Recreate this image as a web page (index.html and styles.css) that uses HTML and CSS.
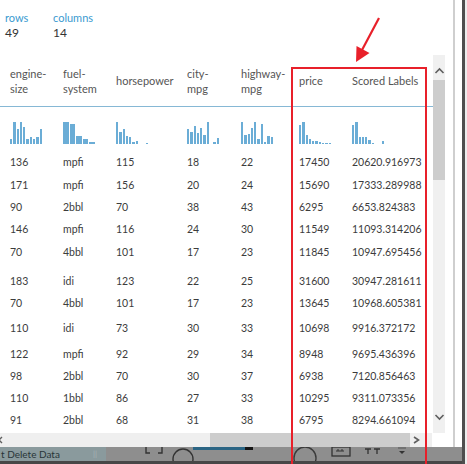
FILE: index.html
```html
<!DOCTYPE html>
<html>
<head>
<meta charset="utf-8">
<link rel="stylesheet" href="styles.css">
</head>
<body>
<div class="screen">
  <div class="app">
    <div class="main">
      <div class="pane">
        <div class="stats">
          <div class="stat"><div class="stat-label">rows</div><div class="stat-value">49</div></div>
          <div class="stat"><div class="stat-label">columns</div><div class="stat-value">14</div></div>
        </div>
        <div class="viewport">
          <div class="table">
            <div class="cols head">
              <div>engine-<br>size</div>
              <div>fuel-<br>system</div>
              <div>horsepower</div>
              <div>city-<br>mpg</div>
              <div>highway-<br>mpg</div>
              <div>price</div>
              <div>Scored Labels</div>
            </div>
            <div class="cols hists">
              <div class="hist"><span style="height:5px"></span><span style="height:22px"></span><span style="height:15px"></span><span style="height:22px"></span><span style="height:17px"></span><span style="height:5px"></span><span style="height:7px"></span><span style="height:5px"></span><span style="height:7px"></span><span style="height:15px"></span></div>
              <div class="hist"><span style="height:22px"></span><span style="height:20px"></span><span style="height:8px"></span><span style="height:5px"></span><span style="height:2px"></span></div>
              <div class="hist"><span style="height:22px"></span><span style="height:12px"></span><span style="height:15px"></span><span style="height:8px"></span><span style="height:7px"></span><span style="height:2px"></span><span style="height:3px"></span><span style="height:0"></span><span style="height:0"></span><span style="height:1px"></span></div>
              <div class="hist"><span style="height:15px"></span><span style="height:12px"></span><span style="height:18px"></span><span style="height:11px"></span><span style="height:16px"></span><span style="height:9px"></span><span style="height:22px"></span><span style="height:0"></span><span style="height:2px"></span><span style="height:6px"></span></div>
              <div class="hist"><span style="height:22px"></span><span style="height:9px"></span><span style="height:10px"></span><span style="height:16px"></span><span style="height:22px"></span><span style="height:5px"></span><span style="height:20px"></span><span style="height:2px"></span><span style="height:8px"></span><span style="height:7px"></span></div>
              <div class="hist"><span style="height:19px"></span><span style="height:22px"></span><span style="height:9px"></span><span style="height:5px"></span><span style="height:3px"></span><span style="height:3px"></span><span style="height:2px"></span><span style="height:1px"></span><span style="height:1px"></span><span style="height:1px"></span></div>
              <div class="hist"><span style="height:19px"></span><span style="height:22px"></span><span style="height:7px"></span><span style="height:7px"></span><span style="height:7px"></span><span style="height:4px"></span><span style="height:1px"></span><span style="height:0"></span><span style="height:0"></span><span style="height:3px"></span></div>
            </div>
            <div class="cols rows">
              <div>136</div><div>mpfi</div><div>115</div><div>18</div><div>22</div><div>17450</div><div>20620.916973</div>
              <div>171</div><div>mpfi</div><div>156</div><div>20</div><div>24</div><div>15690</div><div>17333.289988</div>
              <div>90</div><div>2bbl</div><div>70</div><div>38</div><div>43</div><div>6295</div><div>6653.824383</div>
              <div>146</div><div>mpfi</div><div>116</div><div>24</div><div>30</div><div>11549</div><div>11093.314206</div>
              <div>70</div><div>4bbl</div><div>101</div><div>17</div><div>23</div><div>11845</div><div>10947.695456</div>
              <div>183</div><div>idi</div><div>123</div><div>22</div><div>25</div><div>31600</div><div>30947.281611</div>
              <div>70</div><div>4bbl</div><div>101</div><div>17</div><div>23</div><div>13645</div><div>10968.605381</div>
              <div>110</div><div>idi</div><div>73</div><div>30</div><div>33</div><div>10698</div><div>9916.372172</div>
              <div>122</div><div>mpfi</div><div>92</div><div>29</div><div>34</div><div>8948</div><div>9695.436396</div>
              <div>98</div><div>2bbl</div><div>70</div><div>30</div><div>37</div><div>6938</div><div>7120.856463</div>
              <div>110</div><div>1bbl</div><div>86</div><div>27</div><div>33</div><div>10295</div><div>9311.073356</div>
              <div>91</div><div>2bbl</div><div>68</div><div>31</div><div>38</div><div>6795</div><div>8294.661094</div>
            </div>
          </div>
          <div class="vscroll">
            <svg class="vs-btn" width="12" height="25" viewBox="0 0 12 25"><polyline points="2.5,18 6.5,14 10.5,18" fill="none" stroke="#5f5f5f" stroke-width="1.6"/></svg>
            <div class="vthumb"></div>
            <div class="vspace"></div>
            <svg class="vs-btn" width="12" height="25" viewBox="0 0 12 25"><polyline points="2.5,7 6.5,11 10.5,7" fill="none" stroke="#5f5f5f" stroke-width="1.6"/></svg>
          </div>
        </div>
        <div class="hscroll-row">
          <div class="hscroll">
            <svg class="hs-left" width="4" height="14" viewBox="0 0 4 14"><polyline points="2,4 -1,7 2,10" fill="none" stroke="#5f5f5f" stroke-width="1.4"/></svg>
            <div class="hthumb"></div>
            <svg class="hs-right" width="22" height="14" viewBox="0 0 22 14"><polyline points="4,4 8.5,7 4,10" fill="none" stroke="#5f5f5f" stroke-width="1.6"/></svg>
          </div>
        </div>
      </div>
      <div class="gutter"><div class="gutter-line"></div></div>
    </div>
    <div class="strip">
      <div class="strip-left"><span class="strip-text">t Delete Data</span><span class="strip-sep">||</span></div>
      <div class="strip-right">
        <svg width="356" height="14" viewBox="106 447 356 14">
          <polyline points="146,447 146,453 150,453" fill="none" stroke="#333" stroke-width="1.4"/>
          <polyline points="158,453 162,453 162,447" fill="none" stroke="#333" stroke-width="1.4"/>
          <circle cx="183" cy="459" r="10" fill="none" stroke="#333" stroke-width="1.4"/>
          <rect x="193" y="447" width="52" height="3" fill="#2b6584"/>
          <rect x="245" y="447" width="8" height="3" fill="#151515"/>
          <circle cx="305" cy="458" r="11" fill="none" stroke="#3a3a3a" stroke-width="1.4"/>
          <rect x="332" y="447" width="18" height="9" fill="none" stroke="#333" stroke-width="1.3"/>
          <path d="M337,452 v-2 h2 v2 M341,452 v-2 h2 v2" fill="none" stroke="#333" stroke-width="1"/>
          <path d="M365,449 h6 M368,449 v5 M374,449 h6 M377,449 v5" fill="none" stroke="#333" stroke-width="1.3"/>
          <path d="M398,448 h8" stroke="#555" stroke-width="1"/>
          <polygon points="399,451 405,451 402,454" fill="#333"/>
        </svg>
      </div>
    </div>
    <div class="strip-edge"></div>
  </div>
  <div class="edge"></div>

  <div class="annot-box"></div>
  <svg class="annot-arrow" width="467" height="464" viewBox="0 0 467 464">
    <line x1="379" y1="18" x2="362" y2="50" stroke="#e8202a" stroke-width="2.2"/>
    <polygon points="356,62 356.5,46 369.5,53" fill="#e8202a"/>
  </svg>
</div>
</body>
</html>
```
FILE: styles.css
```css
html, body {
  margin: 0;
  padding: 0;
}

body {
  width: 467px;
  height: 464px;
  overflow: hidden;
  background: #fff;
  font-family: Lato, "Open Sans", "DejaVu Sans", sans-serif;
  font-size: 11px;
  color: #3c3c3c;
}

.screen {
  position: relative;
  display: flex;
  width: 467px;
  height: 464px;
  overflow: hidden;
}

.app {
  width: 462px;
  display: flex;
  flex-direction: column;
}

.main {
  display: flex;
  height: 447px;
}

.pane {
  width: 446px;
  display: flex;
  flex-direction: column;
}

/* stats */
.stats {
  height: 55px;
  box-sizing: border-box;
  display: flex;
  padding: 10px 0 0 5px;
  line-height: 15px;
}

.stat {
  width: 48px;
}

.stat-label {
  color: #3a9ad0;
}

.stat-value {
  color: #333;
  font-size: 12px;
}

/* table */
.viewport {
  display: flex;
  height: 378px;
}

.table {
  width: 433px;
  overflow: hidden;
}

.cols {
  display: grid;
  grid-template-columns: 53px 53px 71px 54px 58px 53px 1fr;
  padding-left: 10px;
}

.head {
  height: 51px;
  border-bottom: 1px solid #86b8d5;
  align-items: center;
  line-height: 15px;
  color: #555;
}

.hists {
  height: 44px;
  box-sizing: border-box;
  align-items: end;
  padding-bottom: 7px;
}

.hist {
  display: flex;
  align-items: flex-end;
  gap: 1px;
  width: 32px;
  height: 22px;
}

.hist span {
  flex: 1;
  background: #6badd6;
}

.rows {
  grid-template-rows: 22.5px 22.5px 22px 22.5px 29px 22px 25px 26px 22px 22px 22px 24.5px;
  line-height: 23px;
  font-size: 10.5px;
  white-space: nowrap;
}

/* vertical scrollbar */
.vscroll {
  width: 12px;
  background: #f0f0f0;
  display: flex;
  flex-direction: column;
}

.vs-btn {
  display: block;
  flex: none;
}

.vthumb {
  height: 100px;
  background: #cdcdcd;
}

.vspace {
  flex: 1;
}

/* horizontal scrollbar */
.hscroll-row {
  height: 14px;
  display: flex;
}

.hscroll {
  width: 432px;
  background: #efefef;
  display: flex;
  align-items: stretch;
}

.hs-left {
  display: block;
}

.hthumb {
  margin-left: 206px;
  width: 200px;
  background: #cdcdcd;
}

.hs-right {
  display: block;
}

/* right gutter of the window */
.gutter {
  width: 16px;
  display: flex;
}

.gutter-line {
  margin-left: 7px;
  width: 2px;
  background: #cfcfcf;
}

/* bottom taskbar strip */
.strip {
  height: 14px;
  display: flex;
  background: #8e8e8e;
  overflow: hidden;
}

.strip-left {
  width: 106px;
  background: #8a9a9d;
  display: flex;
  align-items: center;
  overflow: hidden;
  color: #283538;
  font-size: 10px;
  line-height: 12px;
  padding-left: 1px;
  box-sizing: border-box;
}

.strip-text {
  width: 92px;
  white-space: nowrap;
}

.strip-sep {
  color: #a8b3b5;
  font-size: 8px;
  line-height: 8px;
}

.strip-right {
  flex: 1;
}

.strip-right svg {
  display: block;
}

.strip-edge {
  height: 3px;
  background: #474747;
}

.edge {
  width: 2px;
  border-left: 3px solid #4e4e4e;
  background: #ececec;
}

/* annotation overlays */
.annot-box {
  position: absolute;
  left: 291px;
  top: 67px;
  width: 136px;
  height: 420px;
  box-sizing: border-box;
  border: 2px solid #e8202a;
}

.annot-arrow {
  position: absolute;
  left: 0;
  top: 0;
  pointer-events: none;
}
```
